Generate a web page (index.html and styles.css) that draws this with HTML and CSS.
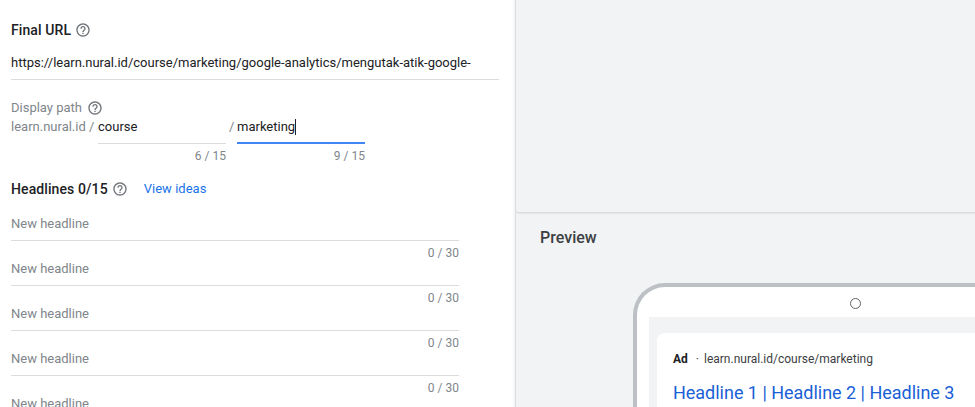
FILE: index.html
```html
<!DOCTYPE html>
<html lang="en">
<head>
<meta charset="utf-8">
<title>Ad editor</title>
<link rel="stylesheet" href="styles.css">
</head>
<body>
<div class="page">
  <main class="form">
    <div class="label-row title-url">
      <span class="strong">Final URL</span>
      <svg class="help" viewBox="0 0 24 24"><path d="M11 18h2v-2h-2v2zm1-16C6.48 2 2 6.48 2 12s4.48 10 10 10 10-4.48 10-10S17.52 2 12 2zm0 18c-4.41 0-8-3.59-8-8s3.59-8 8-8 8 3.59 8 8-3.59 8-8 8zm0-14c-2.21 0-4 1.79-4 4h2c0-1.1.9-2 2-2s2 .9 2 2c0 2-3 1.75-3 5h2c0-2.25 3-2.5 3-5 0-2.21-1.79-4-4-4z"/></svg>
    </div>
    <div class="url-field">https://learn.nural.id/course/marketing/google-analytics/mengutak-atik-google-</div>

    <div class="label-row title-path">
      <span class="muted">Display path</span>
      <svg class="help" viewBox="0 0 24 24"><path d="M11 18h2v-2h-2v2zm1-16C6.48 2 2 6.48 2 12s4.48 10 10 10 10-4.48 10-10S17.52 2 12 2zm0 18c-4.41 0-8-3.59-8-8s3.59-8 8-8 8 3.59 8 8-3.59 8-8 8zm0-14c-2.21 0-4 1.79-4 4h2c0-1.1.9-2 2-2s2 .9 2 2c0 2-3 1.75-3 5h2c0-2.25 3-2.5 3-5 0-2.21-1.79-4-4-4z"/></svg>
    </div>
    <div class="path-row">
      <span class="muted domain">learn.nural.id /</span>
      <div class="path-col">
        <div class="path-input">course</div>
        <div class="count">6 / 15</div>
      </div>
      <span class="muted slash">/</span>
      <div class="path-col">
        <div class="path-input focused">marketing<span class="caret"></span></div>
        <div class="count">9 / 15</div>
      </div>
    </div>

    <div class="label-row title-head">
      <span class="strong">Headlines 0/15</span>
      <svg class="help" viewBox="0 0 24 24"><path d="M11 18h2v-2h-2v2zm1-16C6.48 2 2 6.48 2 12s4.48 10 10 10 10-4.48 10-10S17.52 2 12 2zm0 18c-4.41 0-8-3.59-8-8s3.59-8 8-8 8 3.59 8 8-3.59 8-8 8zm0-14c-2.21 0-4 1.79-4 4h2c0-1.1.9-2 2-2s2 .9 2 2c0 2-3 1.75-3 5h2c0-2.25 3-2.5 3-5 0-2.21-1.79-4-4-4z"/></svg>
      <a class="ideas">View ideas</a>
    </div>

    <div class="headlines">
      <div class="headline"><div class="head-input">New headline</div><div class="count">0 / 30</div></div>
      <div class="headline"><div class="head-input">New headline</div><div class="count">0 / 30</div></div>
      <div class="headline"><div class="head-input">New headline</div><div class="count">0 / 30</div></div>
      <div class="headline"><div class="head-input">New headline</div><div class="count">0 / 30</div></div>
      <div class="headline"><div class="head-input">New headline</div><div class="count">0 / 30</div></div>
    </div>
  </main>

  <aside class="side">
    <div class="top-card"></div>
    <h2 class="preview-title">Preview</h2>
    <div class="device">
      <div class="camera"></div>
      <div class="screen">
        <div class="ad-card">
          <div class="ad-meta"><b class="ad-tag">Ad</b><span class="dot">·</span><span>learn.nural.id/course/marketing</span></div>
          <div class="ad-title">Headline 1 | Headline 2 | Headline 3</div>
        </div>
      </div>
    </div>
  </aside>
</div>
</body>
</html>
```

FILE: styles.css
```css
* { box-sizing: border-box; }
html, body { margin: 0; height: 407px; overflow: hidden; }
body { font-family: Roboto, "Liberation Sans", sans-serif; color: #202124; background: #fff; }
.page { display: flex; height: 407px; overflow: hidden; }

.form { width: 516px; flex: none; padding: 0 16px 0 11px; border-right: 1px solid #dadce0; box-shadow: inset -3px 0 3px -2px rgba(60, 64, 67, .08); overflow: hidden; }
.label-row { display: flex; align-items: center; }
.strong { font-size: 14px; font-weight: 500; line-height: 20px; color: #202124; letter-spacing: .1px; }
.muted { font-size: 13px; line-height: 18px; color: #80868b; }
.help { width: 16px; height: 16px; fill: #70757a; flex: none; margin-left: 5px; }
.strong + .help { margin-left: 4px; }

.title-url { padding-top: 20px; height: 40px; }
.url-field { margin-top: 4px; height: 36px; padding-top: 6px; font-size: 13px; line-height: 26px; border-bottom: 1px solid #dadce0; width: 488px; white-space: nowrap; overflow: hidden; color: #202124; }

.title-path { margin-top: 19px; height: 18px; }

.path-row { display: flex; align-items: flex-start; margin-top: 1px; }
.domain { width: 87px; flex: none; line-height: 18px; }
.path-col { width: 128px; flex: none; }
.path-input { height: 26px; font-size: 13px; line-height: 18px; color: #202124; border-bottom: 1px solid #dadce0; display: flex; align-items: flex-start; }
.path-input.focused { border-bottom: 2px solid #4285f4; }
.caret { display: inline-block; width: 1px; height: 16px; background: #202124; margin-top: 1px; }
.slash { width: 8px; flex: none; margin-left: 3px; }
.count { font-size: 12px; line-height: 16px; color: #80868b; text-align: right; margin-top: 4px; }

.title-head { margin-top: 15px; height: 20px; }
.ideas { margin-left: 16px; font-size: 13px; letter-spacing: .02px; line-height: 20px; color: #1a73e8; }

.headlines { margin-top: 15px; width: 448px; }
.headline { height: 45px; }
.head-input { height: 27px; font-size: 13px; line-height: 18px; padding-top: 1px; color: #80868b; border-bottom: 1px solid #dadce0; }
.headline .count { margin-top: 4px; }

.side { flex: 1; min-width: 0; background: #f1f3f4; overflow: hidden; }
.top-card { height: 213px; background: #f1f3f4; border-bottom: 1px solid #dadce0; border-bottom-left-radius: 3px; box-shadow: 0 1px 1px rgba(60, 64, 67, .08); }
.preview-title { margin: 15px 0 0 24px; font-size: 16px; font-weight: 500; line-height: 20px; color: #3c4043; }
.device { margin: 35px 0 0 117px; width: 460px; height: 300px; background: #fff; border: 4px solid #bdc1c6; border-bottom: 0; border-right: 0; border-top-left-radius: 32px; }
.camera { width: 11px; height: 11px; border: 1px solid #5f6368; border-radius: 50%; margin: 11px 0 0 213px; }
.screen { margin: 8px 0 0 12px; background: #f1f3f4; padding: 16px 0 0 8px; height: 200px; }
.ad-card { background: #fff; border-radius: 8px 0 0 0; padding: 18px 16px 16px; height: 200px; }
.ad-meta { display: flex; align-items: center; font-size: 12px; line-height: 16px; color: #3c4043; }
.ad-tag { font-weight: 700; color: #202124; }
.dot { margin: 0 5px 0 8px; }
.ad-title { margin-top: 14px; font-size: 18px; line-height: 24px; letter-spacing: -.02px; color: #1a5fd6; white-space: nowrap; }
```
